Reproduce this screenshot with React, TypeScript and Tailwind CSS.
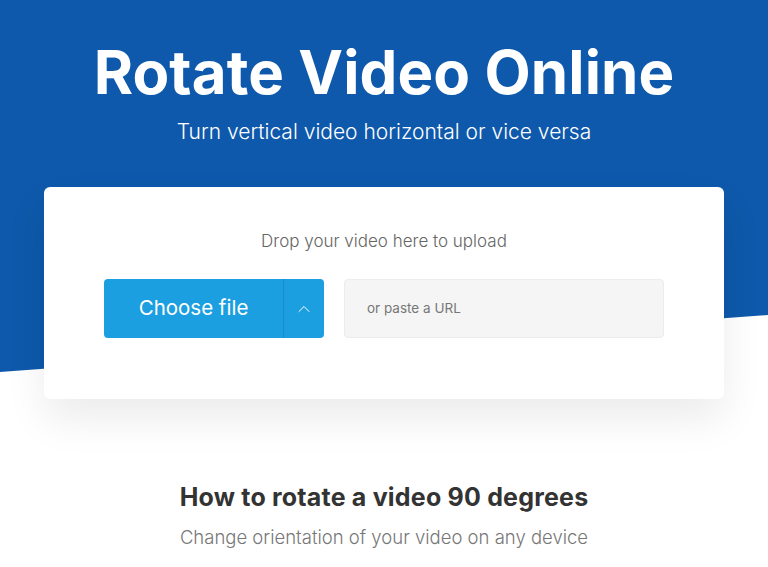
import { ChevronUp } from "lucide-react"

export default function App() {
  return (
    <div className="relative min-h-[567px] bg-white overflow-hidden" style={{ fontFamily: "Inter, 'Noto Sans', sans-serif" }}>
      {/* slanted blue hero backdrop */}
      <div className="absolute inset-x-0 top-0 h-[372px] bg-[#0e59ab] [clip-path:polygon(0_0,100%_0,100%_315px,0_372px)]" />

      <div className="relative flex flex-col items-center">
        <h1 className="mt-[36px] text-[60px] leading-[72px] font-bold tracking-[0.1px] text-white">
          Rotate Video Online
        </h1>
        <p className="mt-[10px] text-[21px] leading-[28px] font-light text-white">
          Turn vertical video horizontal or vice versa
        </p>

        <div className="mt-[41px] w-[680px] h-[212px] rounded-md bg-white shadow-[0_20px_40px_rgba(0,0,0,0.08)] flex flex-col items-center">
          <p className="mt-[43px] text-[17px] leading-[22px] font-light text-[#666]">
            Drop your video here to upload
          </p>
          <div className="mt-[27px] flex gap-[20px]">
            <button className="flex h-[59px] w-[220px] rounded-[4px] bg-[#1c9fe0] text-white">
              <span className="flex-1 flex items-center justify-center text-[20.5px] font-normal">Choose file</span>
              <span className="w-[41px] border-l border-[#1a8acb] flex items-center justify-center">
                <ChevronUp className="h-5 w-5" strokeWidth={1.2} />
              </span>
            </button>
            <div className="h-[59px] w-[320px] rounded-[4px] bg-[#f5f5f5] border border-[#ececec] flex items-center px-[22px]">
              <span className="text-[13.5px] text-[#777]">or paste a URL</span>
            </div>
          </div>
        </div>

        <h2 className="mt-[83px] text-[25px] leading-[30px] font-bold tracking-[0.2px] text-[#333]">
          How to rotate a video 90 degrees
        </h2>
        <p className="mt-[12px] text-[18.5px] leading-[26px] font-light text-[#777]">
          Change orientation of your video on any device
        </p>
      </div>
    </div>
  )
}
